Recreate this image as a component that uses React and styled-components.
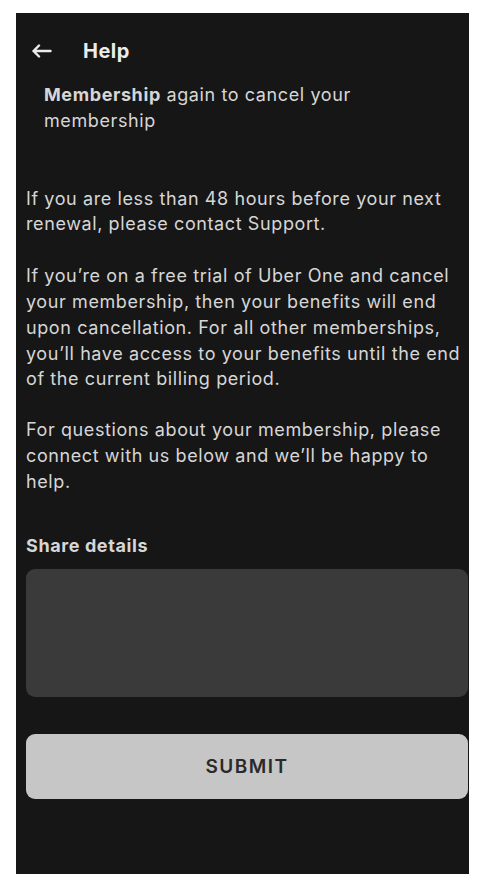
import React from "react";
import styled, { createGlobalStyle } from "styled-components";

const Global = createGlobalStyle`
  html, body { margin: 0; padding: 0; background: #ffffff; }
  body { font-family: Inter, "Noto Sans", "Liberation Sans", sans-serif; }
  * { box-sizing: border-box; }
`;

const Screen = styled.div`
  margin: 13px 0 0 16px;
  width: 453px;
  height: 861px;
  background: #161616;
  overflow: hidden;
  display: flex;
  flex-direction: column;
`;

const Header = styled.header`
  display: flex;
  align-items: center;
  gap: 31px;
  height: 24px;
  margin-top: 26px;
  padding-left: 15px;
`;

const BackIcon = styled.svg`
  width: 21px;
  height: 14px;
  flex: none;
`;

const Title = styled.h1`
  margin: 0;
  font-size: 20px;
  font-weight: 700;
  letter-spacing: 0.5px;
  color: #ececec;
  line-height: 24px;
`;

const Content = styled.div`
  display: flex;
  flex-direction: column;
  padding: 0 1px 0 10px;
`;

const Text = styled.p`
  margin: ${(p) => p.$mt || 0}px 0 0 ${(p) => p.$indent || 0}px;
  font-size: 18px;
  letter-spacing: 0.6px;
  line-height: 25.8px;
  color: #d6d6d6;
  font-weight: 400;
  white-space: nowrap;
`;

const Strong = styled.b`
  font-weight: 700;
`;

const Label = styled.div`
  margin-top: 38px;
  font-size: 18px;
  letter-spacing: 0.6px;
  line-height: 25.8px;
  font-weight: 700;
  color: #d6d6d6;
`;

const TextArea = styled.div`
  margin-top: 11px;
  height: 128px;
  border-radius: 9px;
  background: #3a3a3a;
`;

const SubmitButton = styled.button`
  margin-top: 37px;
  height: 65px;
  border: none;
  border-radius: 9px;
  background: #c6c6c6;
  color: #2a2a2a;
  font-family: inherit;
  font-size: 19px;
  font-weight: 600;
  letter-spacing: 1.5px;
  padding: 0;
  text-align: center;
`;

export default function App() {
  return (
    <>
      <Global />
      <Screen>
        <Header>
          <BackIcon viewBox="0 0 21 14" fill="none" stroke="#ececec" strokeWidth="2.4" strokeLinecap="round" strokeLinejoin="round">
            <path d="M19.5 7H2.5M8 1.5L2.5 7L8 12.5" />
          </BackIcon>
          <Title>Help</Title>
        </Header>
        <Content>
          <Text $mt={19} $indent={18}>
            <Strong>Membership</Strong> again to cancel your
            <br />
            membership
          </Text>
          <Text $mt={52}>
            If you are less than 48 hours before your next
            <br />
            renewal, please contact Support.
          </Text>
          <Text $mt={26}>
            If you’re on a free trial of Uber One and cancel
            <br />
            your membership, then your benefits will end
            <br />
            upon cancellation. For all other memberships,
            <br />
            you’ll have access to your benefits until the end
            <br />
            of the current billing period.
          </Text>
          <Text $mt={25}>
            For questions about your membership, please
            <br />
            connect with us below and we’ll be happy to
            <br />
            help.
          </Text>
          <Label>Share details</Label>
          <TextArea />
          <SubmitButton type="button">SUBMIT</SubmitButton>
        </Content>
      </Screen>
    </>
  );
}
